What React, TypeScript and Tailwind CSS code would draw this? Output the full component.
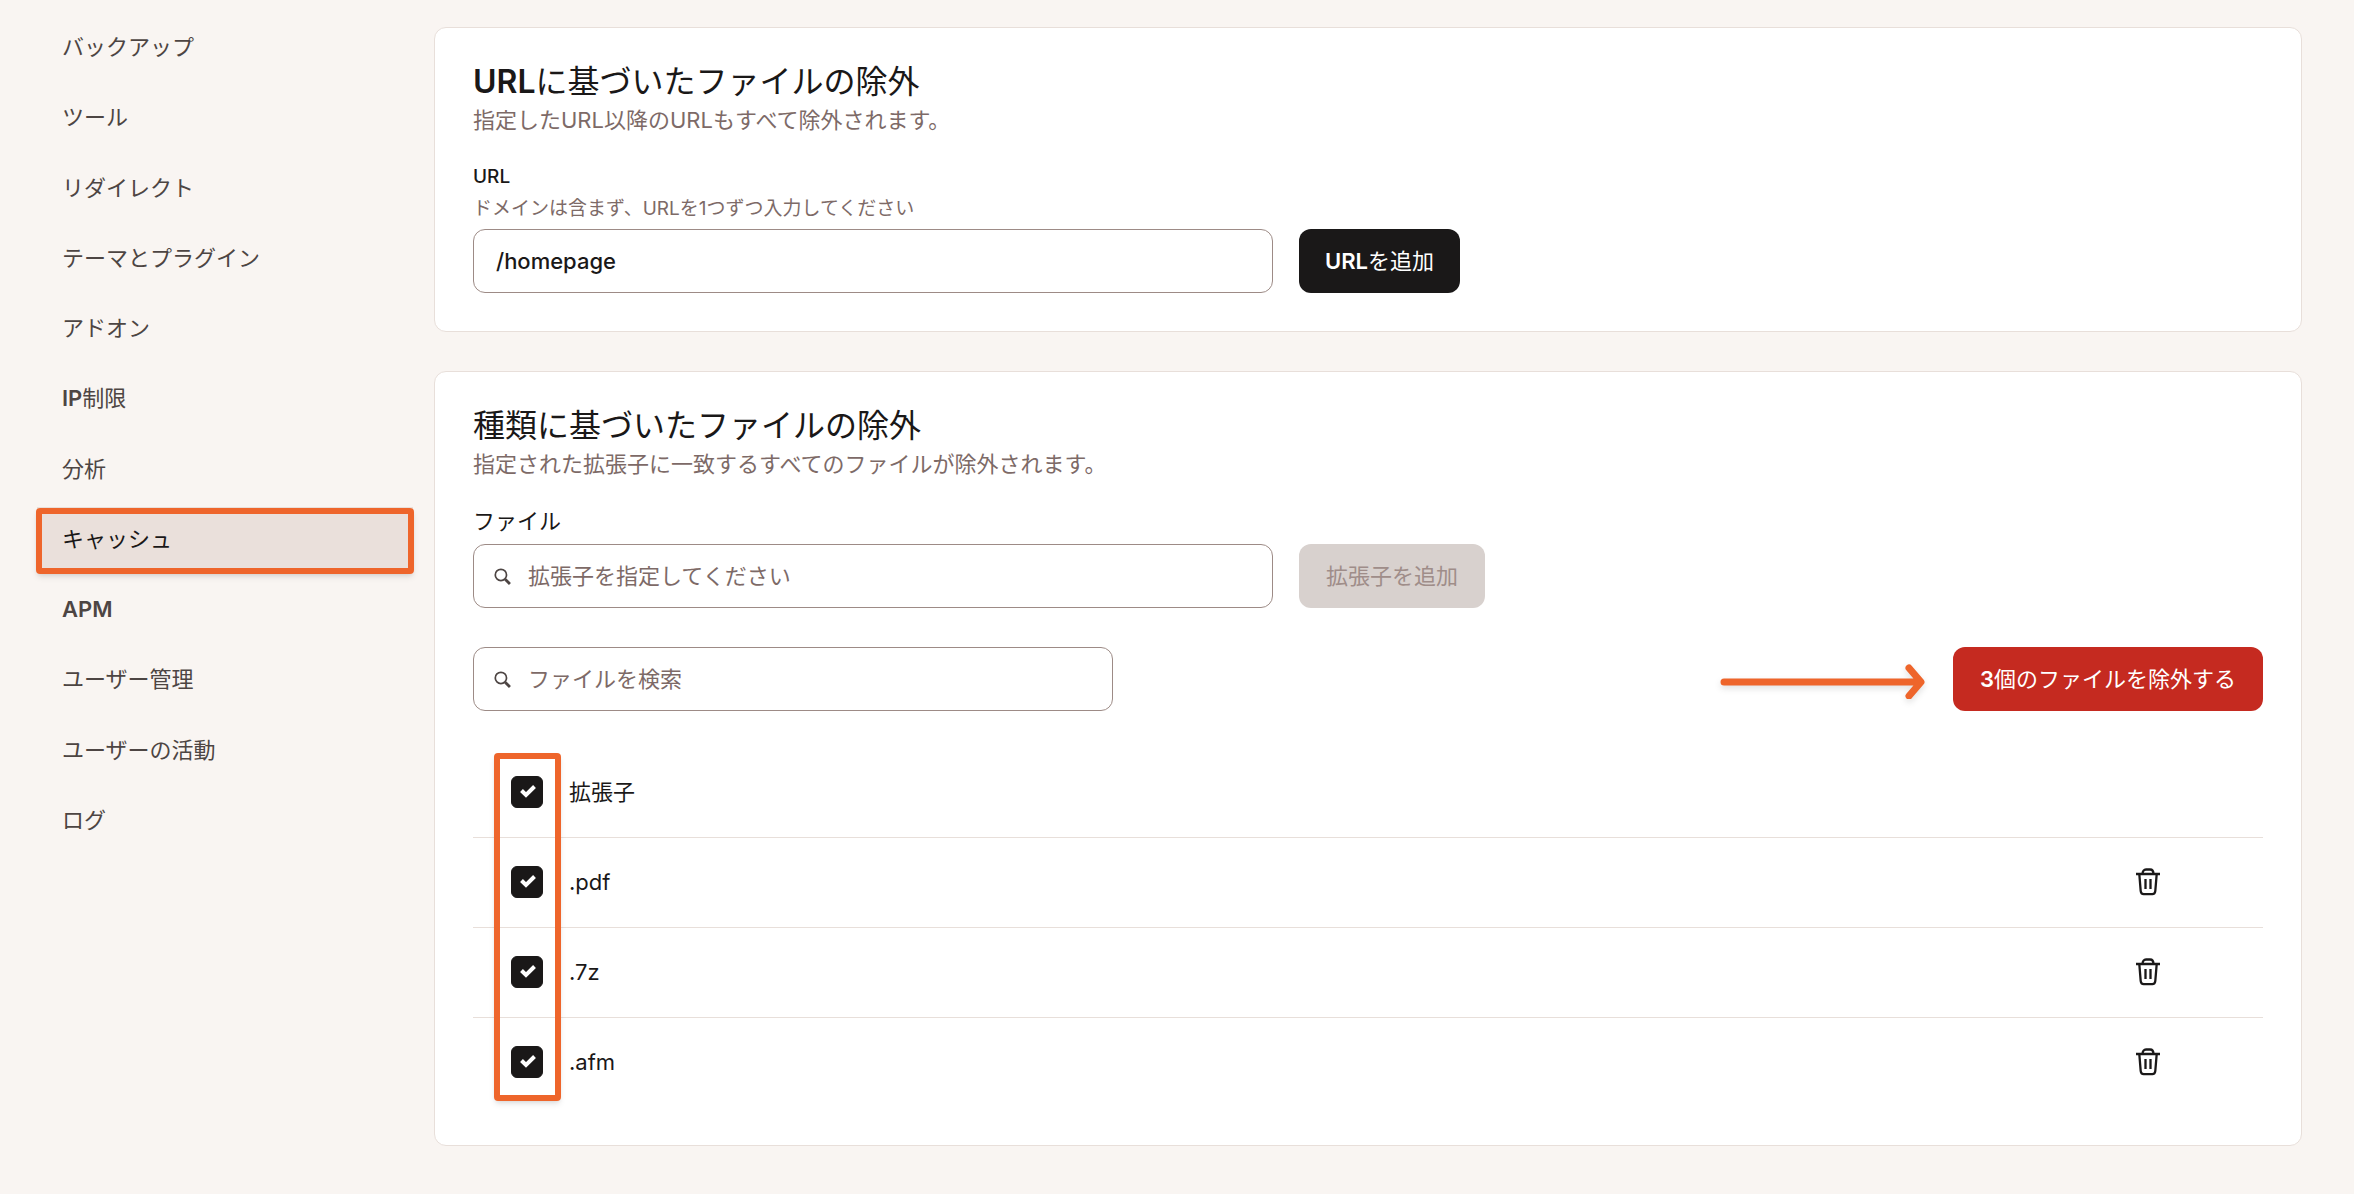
import React, { useState } from 'react';

const navItems = [
  'バックアップ',
  'ツール',
  'リダイレクト',
  'テーマとプラグイン',
  'アドオン',
  'IP制限',
  '分析',
  'キャッシュ',
  'APM',
  'ユーザー管理',
  'ユーザーの活動',
  'ログ',
];

const initialExtensions = ['.pdf', '.7z', '.afm'];

// Latin letters and digits are set heavier than the kana and kanji around them
const Mixed: React.FC<{ text: string }> = ({ text }) => (
  <span>
    {text.split(/([A-Za-z0-9]+)/).map((part, i) =>
      i % 2 === 1 ? <span key={i} className="font-semibold">{part}</span> : part
    )}
  </span>
);

const TrashIcon: React.FC = () => (
  <svg className="w-6 h-7" viewBox="0 0 24 28" fill="none" stroke="currentColor" strokeWidth={2.3}>
    <path d="M0 6h24M6.500 6c0-3 1.500-4.500 3.500-4.500h4c2 0 3.500 1.500 3.500 4.500" />
    <path d="M3.300 6l1.400 17c.2 2.200 1 3.200 3 3.200h8.600c2 0 2.800-1 3-3.200L20.700 6" />
    <path d="M9.500 11v10M14.500 11v10" />
  </svg>
);

const SearchIcon: React.FC = () => (
  <svg className="w-[17px] h-[17px] shrink-0 text-[#4d4543]" viewBox="0 0 16 16" fill="none" stroke="currentColor">
    <circle cx="6.500" cy="6.500" r="5.300" strokeWidth={1.6} />
    <path d="M10.500 10.500l4.500 4.500" strokeWidth={2.6} />
  </svg>
);

interface CheckboxProps {
  id: string;
  checked: boolean;
  label: string;
  onChange: () => void;
}

const CheckboxCell: React.FC<CheckboxProps> = ({ id, checked, label, onChange }) => (
  <div className="flex items-center gap-[26px] pl-[38px]">
    <span className="relative w-8 h-8">
      <input
        id={id}
        type="checkbox"
        checked={checked}
        onChange={onChange}
        className="block w-8 h-8 appearance-none rounded-md border border-[#1a1818] checked:bg-[#1a1818]"
      />
      {checked && (
        <svg className="absolute inset-0 w-8 h-8 pointer-events-none" viewBox="0 0 32 32" fill="none" stroke="#fff" strokeWidth={4}>
          <path d="M10.500 14.500l4.500 4.500 8.500-8.500" />
        </svg>
      )}
    </span>
    <label htmlFor={id}>{label}</label>
  </div>
);

interface SearchFieldProps {
  id: string;
  placeholder: string;
  className: string;
}

const SearchField: React.FC<SearchFieldProps> = ({ id, placeholder, className }) => (
  <div className={`flex items-center gap-[17px] h-16 px-5 border border-[#9d8b86] rounded-xl ${className}`}>
    <SearchIcon />
    <input
      id={id}
      type="text"
      aria-label={placeholder}
      placeholder={placeholder}
      className="flex-1 min-w-0 outline-none placeholder:text-[#7d6a67]"
    />
  </div>
);

export default function App() {
  const [url, setUrl] = useState('/homepage');
  const [selected, setSelected] = useState<string[]>(initialExtensions);

  const allSelected = selected.length === initialExtensions.length;

  const toggle = (ext: string) => {
    setSelected(selected.includes(ext) ? selected.filter((e) => e !== ext) : [...selected, ext]);
  };

  return (
    <div className="min-h-screen flex items-start bg-[#f9f5f2] text-[#1a1818] text-[22px] leading-8 font-['Inter','Noto_Sans_CJK_JP',sans-serif]">
      <nav className="w-[434px] shrink-0 pt-3 pl-[37px] pr-[21px]">
        <ul className="grid auto-rows-fr h-[843px]">
          {navItems.map((item) => {
            const active = item === 'キャッシュ';
            return (
              <li key={item} className="relative flex items-center">
                <a
                  href="#"
                  className={
                    active
                      ? 'flex-1 flex items-center h-16 pl-[25px] bg-[#eae0db]'
                      : 'flex-1 flex items-center h-16 pl-[25px] text-[#4d4543]'
                  }
                >
                  <Mixed text={item} />
                </a>
                {active && (
                  <span className="absolute -inset-x-px top-1 h-[66px] border-6 border-[#ee652b] rounded-sm shadow-md pointer-events-none"></span>
                )}
              </li>
            );
          })}
        </ul>
      </nav>

      <main className="flex-1 min-w-0 pt-[27px] pr-[52px] pb-[47px] flex flex-col gap-[39px]">
        <section className="bg-white border border-[#e8dfda] rounded-xl px-[38px] pt-8 pb-[38px]">
          <h2 className="text-[32px] leading-[44px]"><Mixed text="URLに基づいたファイルの除外" /></h2>
          <p className="text-[#7d6a67]">指定したURL以降のURLもすべて除外されます。</p>
          <label htmlFor="url" className="block mt-[25px] text-[19px] font-medium">URL</label>
          <p className="text-[19px] text-[#7d6a67]">ドメインは含まず、URLを1つずつ入力してください</p>
          <div className="flex gap-[26px] mt-1">
            <input
              id="url"
              type="text"
              value={url}
              onChange={(e) => setUrl(e.target.value)}
              className="w-[800px] h-16 px-[22px] border border-[#9d8b86] rounded-xl outline-none font-medium"
            />
            <button className="h-16 px-[26px] rounded-xl bg-[#1a1818] text-white whitespace-nowrap">
              <Mixed text="URLを追加" />
            </button>
          </div>
        </section>

        <section className="bg-white border border-[#e8dfda] rounded-xl px-[38px] pt-8 pb-[38px]">
          <h2 className="text-[32px] leading-[44px]">種類に基づいたファイルの除外</h2>
          <p className="text-[#7d6a67]">指定された拡張子に一致するすべてのファイルが除外されます。</p>
          <label htmlFor="extension" className="block mt-[25px]">ファイル</label>
          <div className="flex gap-[26px] mt-[7px]">
            <SearchField id="extension" placeholder="拡張子を指定してください" className="w-[800px]" />
            <button disabled className="h-16 px-[27px] rounded-xl bg-[#d8d1ce] text-[#9f8d89] whitespace-nowrap">拡張子を追加</button>
          </div>

          <div className="flex items-center mt-[39px]">
            <SearchField id="search" placeholder="ファイルを検索" className="w-[640px]" />
            <svg className="ml-auto mr-6 w-[210px] h-10 drop-shadow-md" viewBox="0 0 210 40" fill="none" stroke="#ee652b" strokeWidth={7} strokeLinecap="round" strokeLinejoin="round">
              <path d="M5 23h196M190 9l12 14-12 14" />
            </svg>
            <button className="h-16 px-[27px] rounded-xl bg-[#c52a20] text-white whitespace-nowrap">
              <Mixed text={`${selected.length}個のファイルを除外する`} />
            </button>
          </div>

          <div className="relative mt-9">
            <table className="w-full border-collapse">
              <thead>
                <tr className="h-[90px] border-b border-[#e8dfda]">
                  <th scope="col" className="p-0 font-normal text-left">
                    <CheckboxCell
                      id="all"
                      label="拡張子"
                      checked={allSelected}
                      onChange={() => setSelected(allSelected ? [] : initialExtensions)}
                    />
                  </th>
                  <td className="w-[127px]"></td>
                </tr>
              </thead>
              <tbody>
                {initialExtensions.map((ext) => (
                  <tr key={ext} className="h-[90px] border-b border-[#e8dfda] last:border-b-0">
                    <td className="p-0">
                      <CheckboxCell id={ext} label={ext} checked={selected.includes(ext)} onChange={() => toggle(ext)} />
                    </td>
                    <td className="w-[127px] p-0">
                      <button aria-label={`${ext}を削除`} className="block">
                        <TrashIcon />
                      </button>
                    </td>
                  </tr>
                ))}
              </tbody>
            </table>
            {/* highlight around the checkbox column */}
            <div className="absolute left-[21px] inset-y-[6px] w-[67px] border-6 border-[#ee652b] rounded-sm shadow-md pointer-events-none"></div>
          </div>
        </section>
      </main>
    </div>
  );
}
